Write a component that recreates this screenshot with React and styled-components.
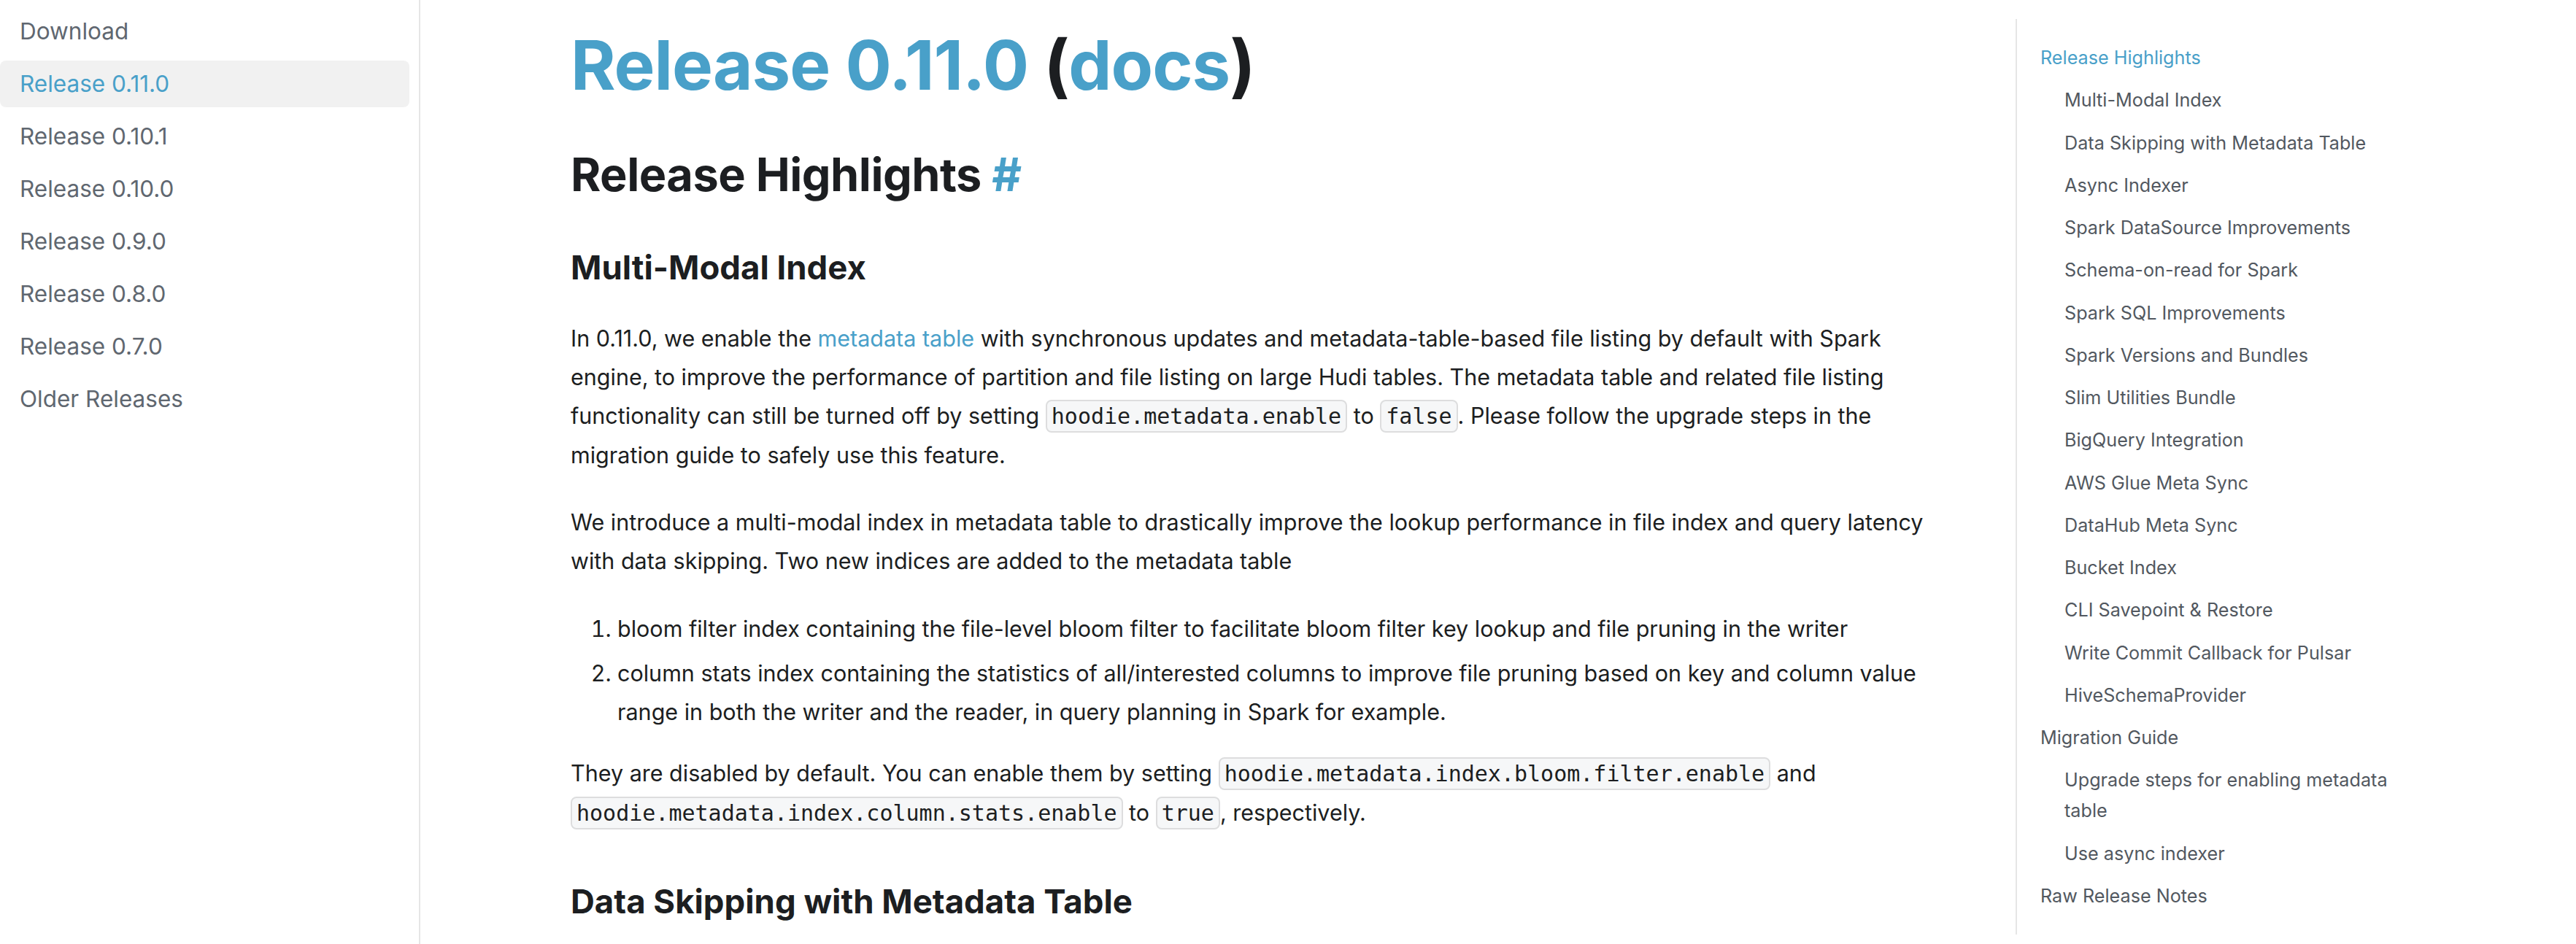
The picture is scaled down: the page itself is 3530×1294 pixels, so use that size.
import React from 'react'
import styled, { createGlobalStyle } from 'styled-components'

const GlobalStyle = createGlobalStyle`
  html, body {
    margin: 0;
    padding: 0;
    background: #fff;
  }
  body {
    font-family: Inter, "Noto Sans", sans-serif;
    color: #1c1e21;
    -webkit-font-smoothing: antialiased;
  }
`

const BLUE = '#49a0c9'

const Page = styled.div`
  display: flex;
  width: 3530px;
  height: 1294px;
  overflow: hidden;
`

const Sidebar = styled.nav`
  width: 576px;
  flex-shrink: 0;
  box-sizing: border-box;
  border-right: 2px solid #e6e6e6;
  padding: 11px 13px 0 0;
`

const MenuLink = styled.a`
  display: block;
  padding: 12px 27px;
  font-size: 31.5px;
  line-height: 40px;
  border-radius: 8px;
  color: ${p => (p.$active ? BLUE : '#606770')};
  background: ${p => (p.$active ? 'rgba(0, 0, 0, 0.055)' : 'transparent')};
  text-decoration: none;
  & + & {
    margin-top: 8px;
  }
`

const Main = styled.main`
  flex: 1;
  display: flex;
  align-items: flex-start;
  padding-left: 206px;
`

const Article = styled.article`
  width: 1880px;
  flex-shrink: 0;
  padding-top: 31px;
`

const Title = styled.h1`
  font-size: 94px;
  font-weight: 700;
  line-height: 1.25;
  margin: 0 0 51px;
  letter-spacing: -1px;
`

const Heading = styled.h2`
  font-size: 63px;
  font-weight: 700;
  line-height: 1.25;
  margin: 0 0 61px;
  letter-spacing: -0.5px;
`

const SubHeading = styled.h3`
  font-size: 45.5px;
  font-weight: 700;
  line-height: 1.25;
  margin: ${p => (p.$spaced ? '66px 0 40px' : '0 0 42px')};
`

const Blue = styled.a`
  color: ${BLUE};
  text-decoration: none;
`

const Para = styled.p`
  font-size: 30.5px;
  line-height: 52.8px;
  margin: 0 0 40px;
`

const Code = styled.code`
  font-family: "DejaVu Sans Mono", "Liberation Mono", monospace;
  font-size: 30px;
  background: #f6f7f8;
  border: 2px solid rgba(0, 0, 0, 0.1);
  border-radius: 8px;
  padding: 3px 6px;
`

const List = styled.ol`
  margin: 0 0 32px;
  padding-left: 64px;
  font-size: 30.5px;
  line-height: 52.8px;
`

const ListItem = styled.li`
  & + & {
    margin-top: 8px;
  }
`

const Toc = styled.aside`
  width: 540px;
  flex-shrink: 0;
  box-sizing: border-box;
  margin: 26px 0 0 100px;
  border-left: 2px solid #e6e6e6;
  padding: 32px 0 32px 32px;
`

const TocList = styled.ul`
  list-style: none;
  margin: 0;
  padding: 0 0 0 ${p => (p.$nested ? '33px' : '0')};
`

const TocItem = styled.li`
  margin-top: ${p => (p.$first ? '0' : '16.25px')};
`

const TocLink = styled.a`
  font-size: 25.2px;
  line-height: 42px;
  color: ${p => (p.$active ? BLUE : '#525860')};
  text-decoration: none;
`

const releases = [
  'Download',
  'Release 0.11.0',
  'Release 0.10.1',
  'Release 0.10.0',
  'Release 0.9.0',
  'Release 0.8.0',
  'Release 0.7.0',
  'Older Releases',
]

const toc = [
  {
    title: 'Release Highlights',
    active: true,
    children: [
      'Multi-Modal Index',
      'Data Skipping with Metadata Table',
      'Async Indexer',
      'Spark DataSource Improvements',
      'Schema-on-read for Spark',
      'Spark SQL Improvements',
      'Spark Versions and Bundles',
      'Slim Utilities Bundle',
      'BigQuery Integration',
      'AWS Glue Meta Sync',
      'DataHub Meta Sync',
      'Bucket Index',
      'CLI Savepoint & Restore',
      'Write Commit Callback for Pulsar',
      'HiveSchemaProvider',
    ],
  },
  {
    title: 'Migration Guide',
    children: ['Upgrade steps for enabling metadata table', 'Use async indexer'],
  },
  { title: 'Raw Release Notes', children: [] },
]

export default function App() {
  return (
    <Page>
      <GlobalStyle />
      <Sidebar>
        {releases.map(r => (
          <MenuLink key={r} href="#" $active={r === 'Release 0.11.0'}>
            {r}
          </MenuLink>
        ))}
      </Sidebar>

      <Main>
        <Article>
          <Title>
            <Blue href="#">Release 0.11.0</Blue> (<Blue href="#">docs</Blue>)
          </Title>
          <Heading>
            Release Highlights <Blue href="#">#</Blue>
          </Heading>
          <SubHeading>Multi-Modal Index</SubHeading>
          <Para>
            In 0.11.0, we enable the <Blue href="#">metadata table</Blue> with synchronous updates and
            metadata-table-based file listing by default with Spark
            <br />
            engine, to improve the performance of partition and file listing on large Hudi tables. The
            metadata table and related file listing
            <br />
            functionality can still be turned off by setting <Code>hoodie.metadata.enable</Code> to{' '}
            <Code>false</Code>. Please follow the upgrade steps in the
            <br />
            migration guide to safely use this feature.
          </Para>
          <Para>
            We introduce a multi-modal index in metadata table to drastically improve the lookup
            performance in file index and query latency
            <br />
            with data skipping. Two new indices are added to the metadata table
          </Para>
          <List>
            <ListItem>
              bloom filter index containing the file-level bloom filter to facilitate bloom filter key
              lookup and file pruning in the writer
            </ListItem>
            <ListItem>
              column stats index containing the statistics of all/interested columns to improve file
              pruning based on key and column value
              <br />
              range in both the writer and the reader, in query planning in Spark for example.
            </ListItem>
          </List>
          <Para>
            They are disabled by default. You can enable them by setting{' '}
            <Code>hoodie.metadata.index.bloom.filter.enable</Code> and
            <br />
            <Code>hoodie.metadata.index.column.stats.enable</Code> to <Code>true</Code>, respectively.
          </Para>
          <SubHeading $spaced>Data Skipping with Metadata Table</SubHeading>
        </Article>

        <Toc>
          <TocList>
            {toc.map((section, i) => (
              <TocItem key={section.title} $first={i === 0}>
                <TocLink href="#" $active={section.active}>
                  {section.title}
                </TocLink>
                {section.children.length > 0 && (
                  <TocList $nested>
                    {section.children.map(c => (
                      <TocItem key={c}>
                        <TocLink href="#">{c}</TocLink>
                      </TocItem>
                    ))}
                  </TocList>
                )}
              </TocItem>
            ))}
          </TocList>
        </Toc>
      </Main>
    </Page>
  )
}
